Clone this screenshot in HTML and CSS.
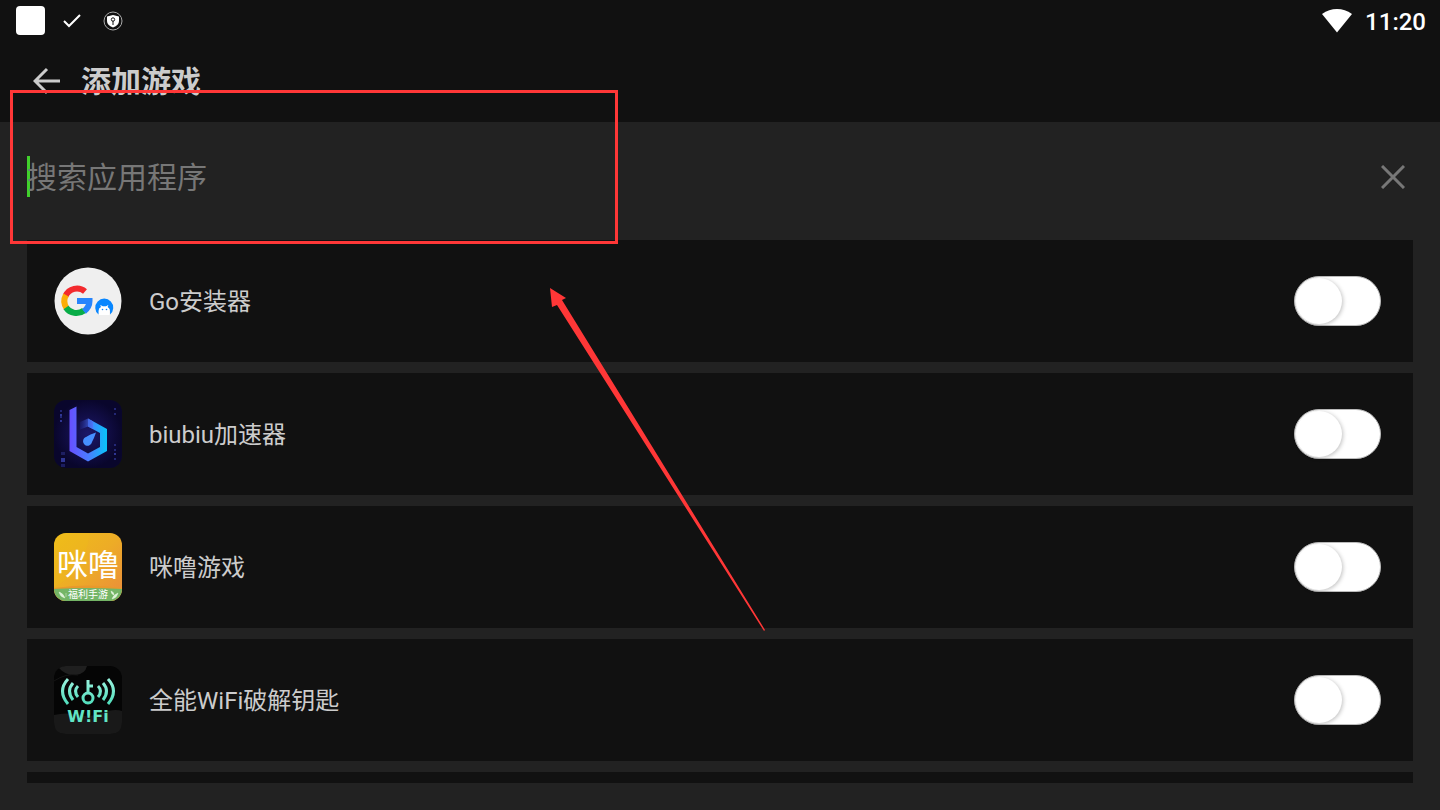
FILE: index.html
```html
<!DOCTYPE html>
<html lang="zh-CN">

<head>
    <meta charset="UTF-8">
    <meta name="viewport" content="width=device-width, initial-scale=1.0">
    <title>添加游戏</title>
    <link rel="stylesheet" href="styles.css">
</head>

<body>
    <div class="status">
        <span class="square"></span>
        <svg class="check" width="20" height="16" viewBox="0 0 20 16" fill="none" stroke="#fff" stroke-width="2">
            <path d="M2 8l5 5L18 2" />
        </svg>
        <svg class="shield" width="20" height="20" viewBox="0 0 20 20">
            <circle cx="10" cy="10" r="9" fill="none" stroke="#aaa" />
            <path d="M10 4l6 1.500v4.500q0 4-6 6.500q-6-2.500-6-6.500V5.500z" fill="#fff" />
            <circle cx="10" cy="8.500" r="1.700" fill="none" stroke="#111" />
            <path d="M10 10v4" stroke="#111" fill="none" />
        </svg>
        <svg class="signal" width="32" height="24" viewBox="0 0 32 24" fill="#fff">
            <path d="M1 5Q8 0 16 0t15 5L16 23.500z" />
        </svg>
        <time>11:20</time>
    </div>

    <header>
        <button class="back" aria-label="返回">
            <svg width="28" height="28" viewBox="0 0 28 28" fill="none" stroke="#ccc" stroke-width="3">
                <path d="M27 14H3M14 2L2 14l12 12" />
            </svg>
        </button>
        <h1>添加游戏</h1>
    </header>

    <div class="search">
        <input type="text" placeholder="搜索应用程序" aria-label="搜索应用程序">
        <button class="clear" aria-label="清除">
            <svg width="24" height="24" viewBox="0 0 24 24" fill="none" stroke="#777" stroke-width="3">
                <path d="M1 1l22 22M23 1L1 23" />
            </svg>
        </button>
    </div>

    <main class="list">
        <div class="app">
            <svg class="icon" viewBox="0 0 68 68">
                <circle cx="34" cy="34" r="33.500" fill="#efefef" />
                <g fill="none" stroke-width="6">
                    <path d="M11.500 29A12.500 12.500 0 0 1 31 24.500" stroke="#f32a2e" />
                    <path d="M12.500 41A12.500 12.500 0 0 1 12 28" stroke="#fbad08" />
                    <path d="M30 43.500A12.500 12.500 0 0 1 12 40.500" stroke="#08ac47" />
                    <path d="M23 34H35.500Q35.500 40 30 44.500" stroke="#2684fc" />
                </g>
                <path d="M44.500 47.500A9 9 0 1 1 56 47.500V44q0-3-3-4l1-2-2 1.500h-4L46 38l1 2q-2.500 1-2.500 4z" fill="#0786ff" />
                <path d="M45 48v-4q0-3 2.500-4l-1-2 2.500 1.500h3l2.500-1.500-1 2q2 1 2 4v4z" fill="#fff" />
                <circle cx="48.500" cy="42.500" r=".8" fill="#0786ff" />
                <circle cx="52.500" cy="42.500" r=".8" fill="#0786ff" />
            </svg>
            <label for="app1">Go安装器</label>
            <input type="checkbox" id="app1">
        </div>

        <div class="app">
            <svg class="icon" viewBox="0 0 68 68">
                <defs>
                    <radialGradient id="night">
                        <stop offset="0" stop-color="#1c1768" />
                        <stop offset="1" stop-color="#09062c" />
                    </radialGradient>
                    <linearGradient id="blue" gradientUnits="userSpaceOnUse" x1="16" y1="0" x2="53" y2="0">
                        <stop offset="0" stop-color="#6650ff" />
                        <stop offset=".5" stop-color="#4a7dff" />
                        <stop offset="1" stop-color="#08c4fa" />
                    </linearGradient>
                    <linearGradient id="fade">
                        <stop offset="0" stop-color="#2632a0" stop-opacity=".2" />
                        <stop offset="1" stop-color="#4d76fa" />
                    </linearGradient>
                </defs>
                <rect width="68" height="68" rx="12" fill="url(#night)" />
                <path d="M15.500 10l7-3.500V47L34 53.500 46 47V33l-12-6.500V18.500L53 29V51L34 61.500 15.500 51z" fill="url(#blue)" />
                <path d="M26 22l8-3.500 5 3V29l-5-2.500-8 3z" fill="url(#fade)" />
                <path d="M42 32.500q-2 6-4 9.500a4.500 4.500 0 1 1-6-5q4-3 10-4.500" fill="#468fff" />
                <g fill="#2f3694">
                    <path d="M6 10h2v2H6zM6 16h2v2H6zM60 8h2v2h-2zM60 13h2v2h-2zM60 44h2v2h-2zM60 49h2v2h-2zM60 58h2v2h-2z" opacity=".7" />
                    <path d="M6 14h2v2H6zM6 20h2v2H6zM60 53h2v2h-2zM7 58h4v4H7z" />
                    <path d="M7 52h4v3H7zM7 64h4v3H7z" opacity=".5" />
                </g>
            </svg>
            <label for="app2">biubiu加速器</label>
            <input type="checkbox" id="app2">
        </div>

        <div class="app">
            <svg class="icon" viewBox="0 0 68 68">
                <defs>
                    <linearGradient id="gold" x2="1" y2="1">
                        <stop offset="0" stop-color="#efbd1b" />
                        <stop offset=".5" stop-color="#edac26" />
                        <stop offset="1" stop-color="#ea8b3d" />
                    </linearGradient>
                    <clipPath id="tile">
                        <rect width="68" height="68" rx="12" />
                    </clipPath>
                </defs>
                <g clip-path="url(#tile)">
                    <rect width="68" height="68" fill="url(#gold)" />
                    <path d="M0 54Q30 40 36 0H0z" fill="#f0be17" opacity=".3" />
                    <path d="M0 55q34-5 68 0v13H0z" fill="#e8992c" />
                    <path d="M0 56q34-2 68 0v12H0z" fill="#74b566" />
                    <path d="M5 59q4 1 6 6-5-1-6-6M12 60v4M57 58q3 1 3 4-3-1-3-4M58 66q1-4 6-6-1 5-6 6" fill="#dff2d8" stroke="#dff2d8" stroke-width=".5" />
                </g>
                <text class="logo-name" x="34" y="43" text-anchor="middle">咪噜</text>
                <text class="logo-tag" x="34" y="65" text-anchor="middle">福利手游</text>
            </svg>
            <label for="app3">咪噜游戏</label>
            <input type="checkbox" id="app3">
        </div>

        <div class="app">
            <svg class="icon" viewBox="0 0 68 68">
                <defs>
                    <linearGradient id="mint" gradientUnits="userSpaceOnUse" x1="0" y1="12" x2="0" y2="40">
                        <stop offset="0" stop-color="#9cf3df" />
                        <stop offset="1" stop-color="#4bdcb9" />
                    </linearGradient>
                </defs>
                <rect width="68" height="68" rx="12" fill="#050505" />
                <path d="M0 49q12-3 24 0t24-2 20-2v11q0 12-12 12H12Q0 68 0 56z" fill="#191919" />
                <path d="M5 2q3-2 7-2h21q-2 8-11 9Q12 10 5 2" fill="#1f1f1f" />
                <path d="M0 15Q12 7 24 9" fill="none" stroke="#151515" />
                <g fill="none" stroke="url(#mint)" stroke-width="3">
                    <path d="M14 13q-11 12 0 25M19 17q-7 8 0 17M24 20q-5 5 0 11M54 13q11 12 0 25M49 17q7 8 0 17M44 20q5 5 0 11" />
                    <circle cx="34" cy="32" r="5" />
                    <path d="M34 27V14M34 20h5" />
                </g>
                <text class="logo-wifi" x="34" y="56" text-anchor="middle">W!Fi</text>
            </svg>
            <label for="app4">全能WiFi破解钥匙</label>
            <input type="checkbox" id="app4">
        </div>

        <div class="app"></div>
    </main>

    <!-- marks drawn over the screen -->
    <div class="mark"></div>
    <svg class="arrow" width="216" height="344" viewBox="0 0 216 344" fill="#ff3737">
        <path d="M0 0l16 10-4 2L215 342l-1 1L7 17l-5 2z" />
    </svg>
</body>

</html>
```
FILE: styles.css
```css
:root {
    --dark: #111;
    --grey: #222;
    --text: #ccc;
    --red: #ff3737;
}

* {
    box-sizing: border-box;
}

body {
    position: relative;
    display: flex;
    flex-direction: column;
    height: 100vh;
    margin: 0;
    overflow: hidden;
    background: var(--grey);
    color: var(--text);
    font-family: Roboto, "Noto Sans CJK SC", sans-serif;
}

svg {
    display: block;
}

button {
    padding: 0;
    border: none;
    background: none;
}

/* status bar */
.status {
    display: flex;
    align-items: center;
    flex: none;
    height: 41px;
    padding: 0 14px 0 16px;
    background: var(--dark);
    color: #fff;
}

.square {
    width: 29px;
    height: 29px;
    border-radius: 4px;
    background: #fff;
}

.check {
    margin-left: 17px;
}

.shield {
    margin-left: 21px;
}

.signal {
    margin-left: auto;
}

.status time {
    margin-left: 12px;
    padding-top: 2px;
    font-size: 24px;
    font-weight: 500;
}

/* title */
header {
    display: flex;
    align-items: center;
    flex: none;
    gap: 20px;
    height: 81px;
    padding: 0 33px 2px;
    background: var(--dark);
}

header h1 {
    margin: 0;
    padding-top: 3px;
    font-size: 30px;
    line-height: 40px;
}

/* search */
.search {
    display: flex;
    align-items: center;
    flex: none;
    height: 118px;
    padding: 0 35px 8px 27px;
}

.search input {
    flex: 1;
    height: 42px;
    padding: 0;
    border: none;
    outline: none;
    background: linear-gradient(#41d02c, #41d02c) no-repeat 0 0 / 3px 41px;
    color: var(--text);
    font: inherit;
    font-size: 30px;
}

.search input::placeholder {
    color: #777;
}

/* app list */
.list {
    display: flex;
    flex-direction: column;
    flex: 1;
    gap: 11px;
    min-height: 0;
    margin: 0 27px 27px;
    overflow: hidden;
}

.app {
    display: flex;
    align-items: center;
    flex: none;
    gap: 27px;
    height: 122px;
    padding: 0 32px 0 27px;
    background: var(--dark);
}

.icon {
    width: 68px;
    height: 68px;
}

.app label {
    flex: 1;
    padding-bottom: 4px;
    font-size: 24px;
}

.app input {
    appearance: none;
    display: flex;
    align-items: center;
    width: 87px;
    height: 50px;
    margin: 0;
    padding: 0 1px;
    border: 1px solid #bbb;
    border-radius: 25px;
    background: #fff;
}

.app input::before {
    content: "";
    width: 46px;
    height: 46px;
    border-radius: 50%;
    background: #fff;
    box-shadow: 1px 1px 4px rgba(0, 0, 0, .25);
}

.app input:checked {
    justify-content: flex-end;
    background: #41d02c;
}

.logo-name {
    fill: #fff;
    font-size: 31px;
}

.logo-tag {
    fill: #fff;
    font-size: 10px;
}

.logo-wifi {
    fill: #62e5c5;
    font-family: "DejaVu Sans", sans-serif;
    font-size: 16px;
    font-weight: 700;
}

/* marks */
.mark {
    position: absolute;
    top: 90px;
    left: 10px;
    width: 608px;
    height: 154px;
    border: 3px solid var(--red);
    pointer-events: none;
}

.arrow {
    position: absolute;
    top: 288px;
    left: 550px;
    pointer-events: none;
}
```
